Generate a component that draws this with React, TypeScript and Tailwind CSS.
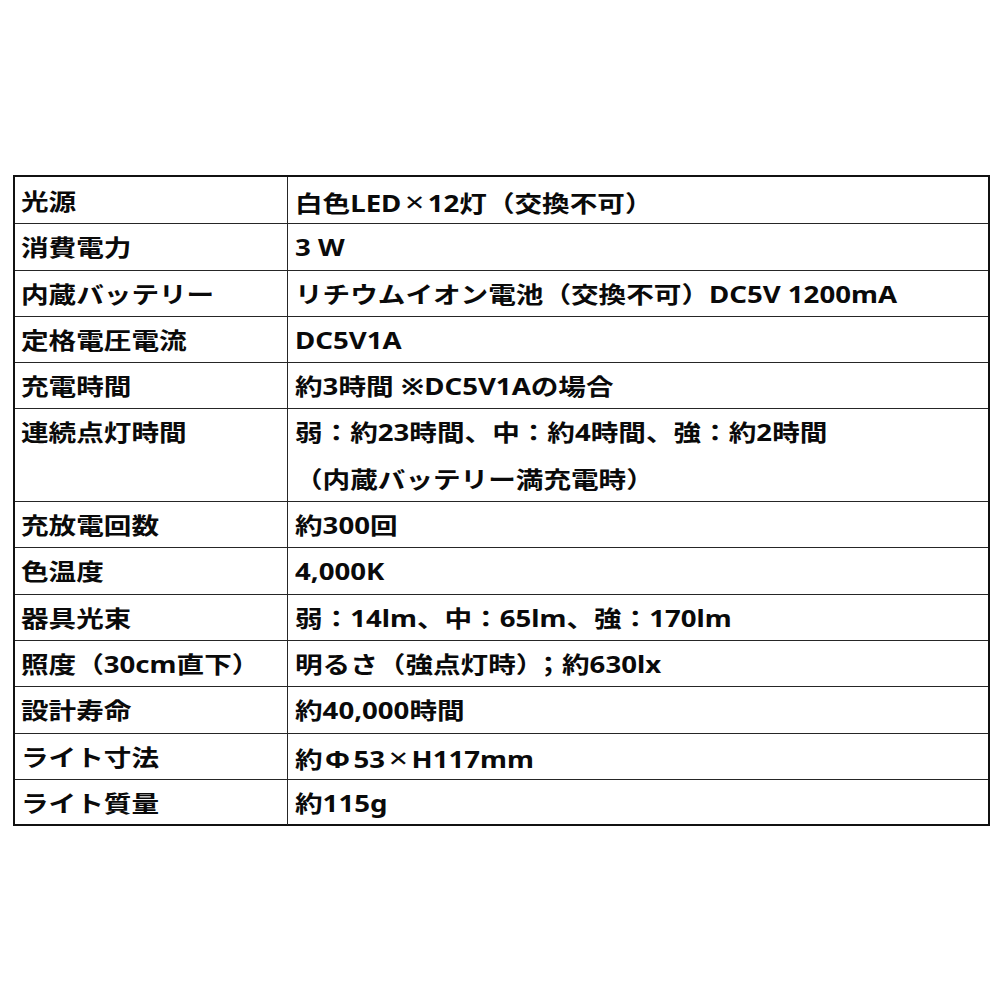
const rows: { label: string; value: string[] }[] = [
  { label: "光源", value: ["白色LED×12灯（交換不可）"] },
  { label: "消費電力", value: ["3 W"] },
  { label: "内蔵バッテリー", value: ["リチウムイオン電池（交換不可）DC5V 1200mA"] },
  { label: "定格電圧電流", value: ["DC5V1A"] },
  { label: "充電時間", value: ["約3時間 ※DC5V1Aの場合"] },
  { label: "連続点灯時間", value: ["弱：約23時間、中：約4時間、強：約2時間", "（内蔵バッテリー満充電時）"] },
  { label: "充放電回数", value: ["約300回"] },
  { label: "色温度", value: ["4,000K"] },
  { label: "器具光束", value: ["弱：14lm、中：65lm、強：170lm"] },
  { label: "照度（30cm直下）", value: ["明るさ（強点灯時）；約630lx"] },
  { label: "設計寿命", value: ["約40,000時間"] },
  { label: "ライト寸法", value: ["約Φ53×H117mm"] },
  { label: "ライト質量", value: ["約115g"] },
];

// a few signs sit wider in the original font
function Line({ text }: { text: string }) {
  const parts = text.split(/([×Φ；])/);
  return (
    <div className="h-[46.3px] pt-[3px] leading-[43px] whitespace-nowrap">
      <span className="inline-block origin-left scale-x-[1.2]">
        {parts.map((p, i) =>
          p === "×" ? (
            <span key={i} className="px-[3px] text-[28px] font-normal">×</span>
          ) : p === "Φ" ? (
            <span key={i} className="pl-[2px] pr-[3px]">Φ</span>
          ) : p === "；" ? (
            <span key={i} className="pl-[4px]">；</span>
          ) : (
            <span key={i}>{p}</span>
          )
        )}
      </span>
    </div>
  );
}

export default function App() {
  return (
    <div
      className="min-h-[1000px] w-[1000px] bg-white pl-[13px] pt-[175px] text-[23px] font-bold text-[#0a0a0a]"
      style={{ fontFamily: '"Noto Sans", "Noto Sans CJK JP", sans-serif' }}
    >
      <div className="w-[977px] border-2 border-[#111]">
        {rows.map((row, i) => (
          <div
            key={row.label}
            className={`flex ${i < rows.length - 1 ? "-mb-px border-b border-[#262626]" : "-mb-px"}`}
          >
            <div className="w-[273px] shrink-0 border-r border-[#262626] pl-[6px]">
              <Line text={row.label} />
            </div>
            <div className="flex-1 pl-[7px]">
              {row.value.map((v) => (
                <Line key={v} text={v} />
              ))}
            </div>
          </div>
        ))}
      </div>
    </div>
  );
}
